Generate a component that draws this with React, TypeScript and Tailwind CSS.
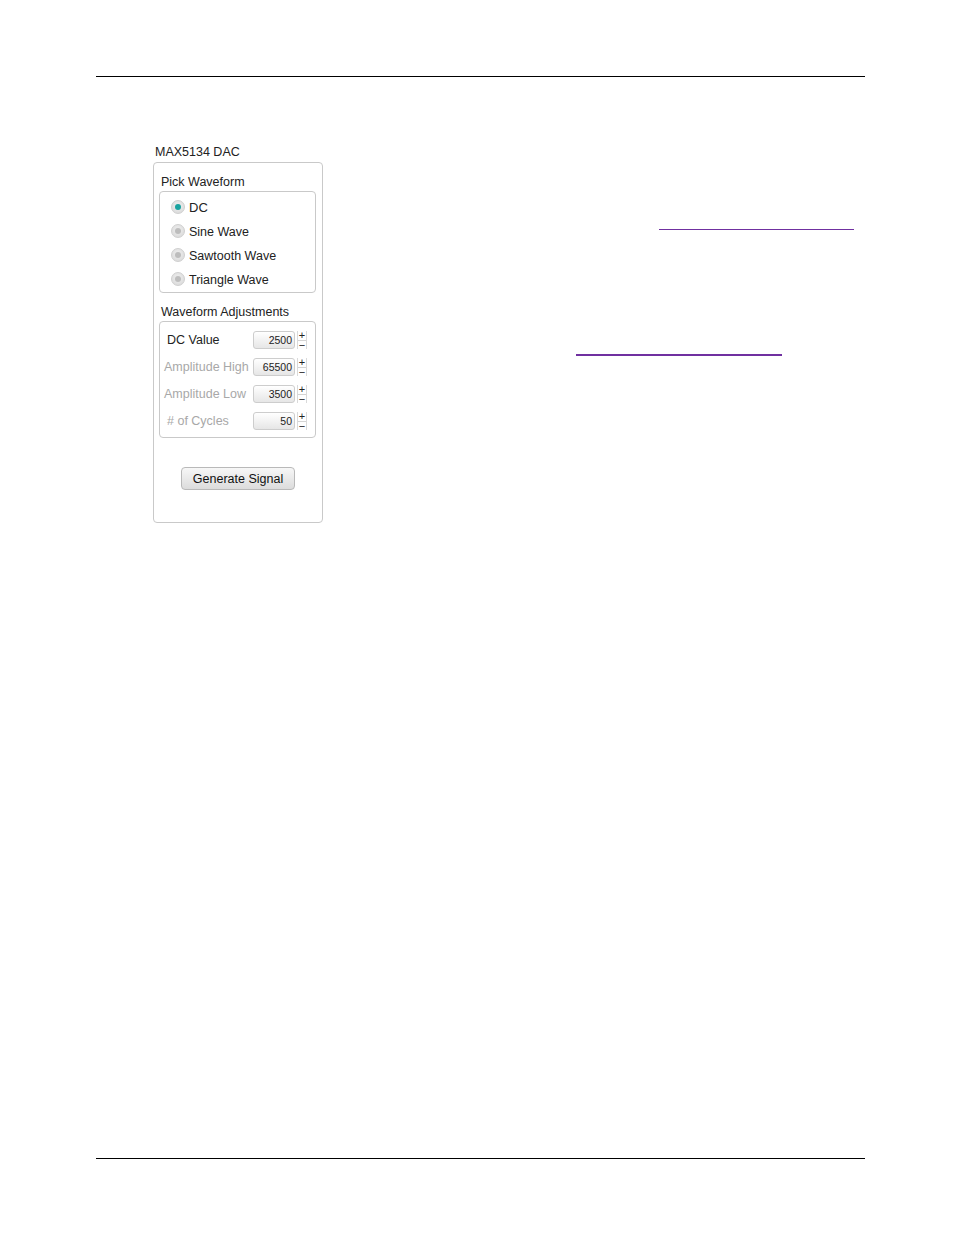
import React from "react";

function Radio({ label, checked }: { label: string; checked?: boolean }) {
  return (
    <div className="flex items-center h-[24px] pl-[11px]">
      <div className="w-[14px] h-[14px] rounded-full border border-[#cfcfcf] bg-[radial-gradient(circle_at_50%_40%,#f0f0f0,#d6d6d6)] flex items-center justify-center">
        <div className={checked ? "w-[6px] h-[6px] rounded-full bg-[#1aa3a0]" : "w-[6px] h-[6px] rounded-full bg-[#bdbdbd]"} />
      </div>
      <span className={checked ? "ml-[4px] pt-[2px] text-[13px] leading-[16px] text-[#222]" : "ml-[4px] pt-[2px] text-[12.5px] leading-[16px] text-[#222]"}>{label}</span>
    </div>
  );
}

function NumRow({ label, value, enabled, labelPad }: { label: string; value: string; enabled?: boolean; labelPad: string }) {
  return (
    <div className="flex items-center h-[18px]">
      <span className={(enabled ? "text-[#222] " : "text-[#a8a8a8] ") + labelPad + " w-[88px] text-[12.5px] leading-[14px] whitespace-nowrap"}>{label}</span>
      <div className="ml-auto flex items-center mr-[8px]">
        <div className="w-[42px] h-[18px] rounded-[3px] border border-[#cdcdcd] bg-[linear-gradient(to_bottom,#ffffff,#e6e6e6)] flex items-center justify-end pr-[2px] pt-[1px] text-[10.5px] text-[#222]">
          {value}
        </div>
        <div className="ml-[2px] w-[10px] h-[18px] flex flex-col items-center justify-center border-l border-r border-[#dadada] text-[11px] leading-[9px] text-[#222]">
          <span>+</span>
          <span className="border-t border-[#d4d4d4] w-full text-center">−</span>
        </div>
      </div>
    </div>
  );
}

export default function App() {
  return (
    <div className="w-[954px] h-[1235px] bg-white flex flex-col font-['Liberation_Sans',Arial,sans-serif]">
      <div className="h-[76px]" />
      <div className="ml-[96px] w-[769px] h-px bg-black" />
      <div className="mt-[67px] flex pl-[153px]">
        <div className="flex flex-col w-[170px]">
          <div className="pl-[2px] pt-[1px] text-[12.5px] leading-[14px] text-[#222] h-[14px]">MAX5134 DAC</div>
          <div className="mt-[4px] w-[170px] h-[361px] border border-[#c9c9c9] rounded-[4px] flex flex-col">
            <div className="mt-[11px] ml-[7px] text-[12.5px] leading-[16px] text-[#222]">Pick Waveform</div>
            <div className="mt-[1px] ml-[5px] w-[157px] h-[102px] border border-[#c9c9c9] rounded-[4px] pt-[3px]">
              <Radio label="DC" checked />
              <Radio label="Sine Wave" />
              <Radio label="Sawtooth Wave" />
              <Radio label="Triangle Wave" />
            </div>
            <div className="mt-[11px] ml-[7px] text-[12.5px] leading-[16px] text-[#222]">Waveform Adjustments</div>
            <div className="mt-[1px] ml-[5px] w-[157px] h-[117px] border border-[#c9c9c9] rounded-[4px] pt-[9px] flex flex-col gap-[9px]">
              <NumRow label="DC Value" value="2500" enabled labelPad="pl-[7px]" />
              <NumRow label="Amplitude High" value="65500" labelPad="pl-[4px]" />
              <NumRow label="Amplitude Low" value="3500" labelPad="pl-[4px]" />
              <NumRow label="# of Cycles" value="50" labelPad="pl-[7px]" />
            </div>
            <div className="mt-[29px] flex justify-center">
              <button className="w-[114px] h-[23px] rounded-[4px] border border-[#b9b9b9] bg-[linear-gradient(to_bottom,#f7f7f7,#dcdcdc)] pt-[1px] text-[12.5px] text-[#111] leading-[16px]">
                Generate Signal
              </button>
            </div>
          </div>
        </div>
        <div className="flex flex-col">
          <div className="mt-[85px] ml-[336px] w-[195px] h-px bg-[#7030a0]" />
          <div className="mt-[124px] ml-[253px] w-[206px] h-[2px] bg-[#7030a0]" />
        </div>
      </div>
      <div className="mt-[635px] ml-[96px] w-[769px] h-px bg-black" />
    </div>
  );
}
